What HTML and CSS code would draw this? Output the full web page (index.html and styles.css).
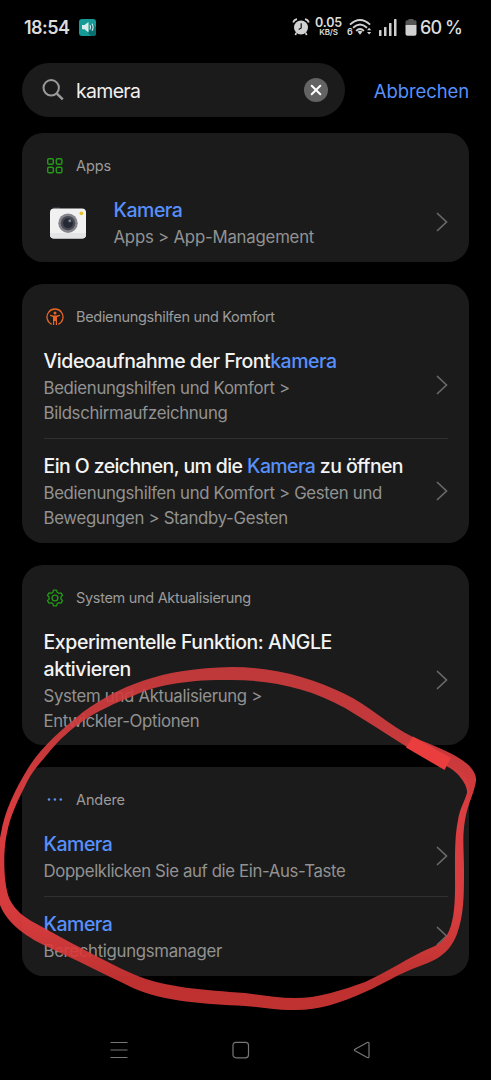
FILE: index.html
```
<!DOCTYPE html>
<html lang="de">
<head>
<meta charset="utf-8">
<meta name="viewport" content="width=device-width, initial-scale=1">
<title>Einstellungen – Suche</title>
<link rel="stylesheet" href="styles.css">
</head>
<body>
<div class="phone">
  <header class="status">
    <span class="clock">18:54</span>
    <svg class="speaker" width="17" height="17" viewBox="0 0 17 17"><rect width="17" height="17" rx="3" fill="#169a98"/><path d="M9 14l4-9 4 3v6a3 3 0 0 1-3 3h-2z" fill="#08706f"/><path d="M3 6h2.500l4-3v10.500l-4-3.300H3z" fill="#d8eceb"/><path d="M11 6.200q1.300 2 0 4.400M13 4.800q2.200 3.500 0 7" fill="none" stroke="#d8eceb" stroke-width="1.100"/></svg>
    <div class="indicators">
      <svg class="alarm" width="18" height="18" viewBox="0 0 18 18"><circle cx="9" cy="9.500" r="7" fill="#d2d2d2"/><path d="M1.200 4.500Q2 1.800 5 1.200M16.800 4.500Q16 1.800 13 1.200M4.300 15l-1 2M13.700 15l1 2" fill="none" stroke="#d2d2d2" stroke-width="1.700"/><path d="M9.200 5.300V10l-2.500 1.500" fill="none" stroke="#111" stroke-width="1.200"/></svg>
      <span class="speed"><span class="rate">0.05</span><span class="unit">KB/S</span></span>
      <span class="wifi"><span class="gen">6</span><svg width="23" height="18" viewBox="0 0 24 18" fill="none" stroke="#d2d2d2"><path d="M1 6.500Q11.500-3.200 22 6.500M4.200 9.800Q11.500 3 18.800 9.800M7.400 13Q11.500 9.200 15.600 13" stroke-width="1.900"/><path d="M8.800 13.800q2.700-2 5.400 0L11.500 17z" fill="#d2d2d2" stroke="none"/><path d="M18.800 12.500l2.200-2.600 2.200 2.600zM18.800 14.200l2.200 2.600 2.200-2.600z" fill="#d2d2d2" stroke="none"/></svg></span>
      <svg class="signal" width="18" height="17" viewBox="0 0 18 17" fill="#cfcfcf"><rect x="0" y="11" width="2.500" height="6" rx=".6"/><rect x="5" y="8" width="2.500" height="9" rx=".6"/><rect x="10" y="4" width="2.500" height="13" rx=".6"/><rect x="15" y="0" width="2.500" height="17" rx=".6"/></svg>
      <svg class="battery" width="12" height="17" viewBox="0 0 12 17"><path d="M3.500 0h5v1.300H10a1.500 1.500 0 0 1 1.500 1.500V6H.5V2.800A1.500 1.500 0 0 1 2 1.300h1.500z" fill="#555"/><path d="M.5 6h11v8.500A2 2 0 0 1 9.500 16.700h-7A2 2 0 0 1 .5 14.500z" fill="#d2d2d2"/></svg>
      <span class="percent">60 %</span>
    </div>
  </header>

  <div class="search-bar">
    <div class="field">
      <svg width="22" height="22" viewBox="0 0 22 22" fill="none" stroke="#9a9a9a" stroke-width="2"><circle cx="9.200" cy="8.800" r="7.700"/><path d="M14.600 14.300l6.200 6.100" stroke-width="2.500"/></svg>
      <span class="query">kamera</span>
      <svg width="24" height="24" viewBox="0 0 24 24"><circle cx="12" cy="12" r="12" fill="#636363"/><path d="M7.700 7.700l8.600 8.600M16.300 7.700l-8.600 8.600" stroke="#fff" stroke-width="2" stroke-linecap="round"/></svg>
    </div>
    <span class="cancel">Abbrechen</span>
  </div>

  <main class="results">
    <section class="card apps">
      <div class="head"><svg width="18" height="18" viewBox="0 0 18 18" fill="none" stroke="#249a18" stroke-width="1.400"><rect x="1.700" y="1.700" width="5.600" height="5.600" rx="1.300"/><rect x="10.300" y="1.700" width="5.600" height="5.600" rx="1.300"/><rect x="1.700" y="10.200" width="5.600" height="5.600" rx="1.300"/><rect x="10.300" y="10.200" width="5.600" height="5.600" rx="1.300"/></svg><span class="short">Apps</span></div>
      <div class="row">
        <svg class="camera" width="38" height="32" viewBox="0 0 38 32"><rect x="4" y="0" width="7" height="4" rx="1" fill="#30313a"/><rect x="1" y="1.600" width="36" height="30" rx="4" fill="#f1f1f1"/><path d="M1 26h36v1.600a4 4 0 0 1-4 4H5a4 4 0 0 1-4-4z" fill="#e4e4e6"/><circle cx="32.400" cy="6.300" r="1.900" fill="#e3c12c"/><circle cx="19" cy="16.200" r="9.700" fill="#85858b"/><circle cx="19" cy="16.200" r="7.300" fill="#484b55"/><circle cx="19" cy="16.200" r="5" fill="#242934"/><circle cx="20.800" cy="13.800" r="1.500" fill="#7c818b"/></svg>
        <div class="text"><div class="title"><b>Kamera</b></div><div class="sub path">Apps &gt; App-Management</div></div>
        <svg class="chevron" width="12" height="20" viewBox="0 0 12 20"><path d="M1.500 1.500l9 8.500-9 8.500"/></svg>
      </div>
    </section>

    <section class="card">
      <div class="head"><svg width="18" height="18" viewBox="0 0 18 18" fill="none" stroke="#e86526" stroke-width="1.300"><path d="M5.700 16.300a8 8 0 1 1 6.600 0"/><circle cx="9" cy="4.900" r="1.500" fill="#e86526" stroke="none"/><path d="M4 6.800l3.200.6h3.600l3.200-.6v1.300l-3 .8v8H9.800v-4H8.200v4H7v-8l-3-.8z" fill="#e86526" stroke="none"/></svg><span>Bedienungshilfen und Komfort</span></div>
      <div class="row">
        <div class="text"><div class="title">Videoaufnahme der Front<b>kamera</b></div><div class="sub">Bedienungshilfen und Komfort &gt;<br>Bildschirmaufzeichnung</div></div>
        <svg class="chevron" width="12" height="20" viewBox="0 0 12 20"><path d="M1.500 1.500l9 8.500-9 8.500"/></svg>
      </div>
      <div class="row ruled">
        <div class="text"><div class="title tight">Ein O zeichnen, um die <b>Kamera</b> zu öffnen</div><div class="sub">Bedienungshilfen und Komfort &gt; Gesten und<br>Bewegungen &gt; Standby-Gesten</div></div>
        <svg class="chevron" width="12" height="20" viewBox="0 0 12 20"><path d="M1.500 1.500l9 8.500-9 8.500"/></svg>
      </div>
    </section>

    <section class="card system">
      <div class="head"><svg width="18" height="18" viewBox="0 0 18 18" fill="none" stroke="#249a18" stroke-width="1.300" stroke-linejoin="round"><path d="M7.500 1.200h3l.7 2.200 1.500.9 2.300-.5 1.500 2.600L14.900 8v2l1.600 1.600-1.500 2.600-2.300-.5-1.500.9-.7 2.200h-3l-.7-2.200-1.500-.9-2.300.5-1.500-2.600L3.100 10V8L1.500 6.400 3 3.800l2.300.5 1.500-.9z"/><circle cx="9" cy="9" r="2.900"/></svg><span>System und Aktualisierung</span></div>
      <div class="row">
        <div class="text"><div class="title loose">Experimentelle Funktion: ANGLE<br>aktivieren</div><div class="sub">System und Aktualisierung &gt;<br>Entwickler-Optionen</div></div>
        <svg class="chevron" width="12" height="20" viewBox="0 0 12 20"><path d="M1.500 1.500l9 8.500-9 8.500"/></svg>
      </div>
    </section>

    <section class="card other">
      <div class="head"><svg width="18" height="18" viewBox="0 0 18 18" fill="#5b8ff0"><circle cx="3" cy="8.500" r="1.300"/><circle cx="8.900" cy="8.500" r="1.300"/><circle cx="14.800" cy="8.500" r="1.300"/></svg><span class="short">Andere</span></div>
      <div class="row">
        <div class="text"><div class="title"><b>Kamera</b></div><div class="sub dense">Doppelklicken Sie auf die Ein-Aus-Taste</div></div>
        <svg class="chevron" width="12" height="20" viewBox="0 0 12 20"><path d="M1.500 1.500l9 8.500-9 8.500"/></svg>
      </div>
      <div class="row ruled">
        <div class="text"><div class="title"><b>Kamera</b></div><div class="sub">Berechtigungsmanager</div></div>
        <svg class="chevron" width="12" height="20" viewBox="0 0 12 20"><path d="M1.500 1.500l9 8.500-9 8.500"/></svg>
      </div>
    </section>
  </main>

  <nav class="nav">
    <svg width="18" height="18" viewBox="0 0 18 18"><path d="M.5 1.500h17M.5 9h17M.5 16.500h17"/></svg>
    <svg width="18" height="18" viewBox="0 0 18 18"><rect x="1" y="1.300" width="15.500" height="15.500" rx="3"/></svg>
    <svg width="18" height="18" viewBox="0 0 18 18"><path d="M2 8.200L14.200 1.500q1.800-.6 1.800 1v13q0 1.600-1.800 1L2 9.800q-1.200-.8 0-1.600z"/></svg>
  </nav>

  <svg class="marker" width="491" height="1080" viewBox="0 0 491 1080">
    <defs><linearGradient id="ink" gradientUnits="userSpaceOnUse" x1="0" y1="660" x2="0" y2="1010"><stop offset="0" stop-color="#ce3b3d"/><stop offset=".2" stop-color="#d53c3e"/><stop offset=".45" stop-color="#ee4245"/><stop offset=".72" stop-color="#ea4042"/><stop offset=".9" stop-color="#d03534"/><stop offset="1" stop-color="#d33735"/></linearGradient></defs>
    <path fill="url(#ink)" fill-rule="evenodd" opacity=".91" d="M232 667C275 667 312 678 345 694C368 705 390 726 413 737C432 745 449 751 462 760C471 766 477 774 476 781C474 794 468 803 465 820C462 838 464 850 464 870C464 895 464 915 457 934C449 955 434 961 420 966C398 974 385 983 365 992C340 1003 320 1010 295 1010C270 1010 262 1007 245 1006C205 1004 165 1002 133 988C100 972 72 958 50 948C28 938 8 925 0 905C-4 890 -3 850 1 833C5 810 15 790 27 770C40 748 60 731 83 712C118 687 160 668 232 667Z
    M232 680C190 679 155 685 133 696C115 703 98 711 83 721C70 730 60 739 50 751C41 762 33 770 27 782C18 800 10 816 7 833C3 850 3 885 10 900C15 910 24 917 33 922C50 931 65 940 83 949C100 958 117 967 133 974C165 988 205 990 245 993C262 995 277 998 295 998C320 998 342 990 365 982C385 973 410 957 428 949C438 945 444 942 449 931C456 915 455 890 455 870C455 850 455 835 458 820C460 808 464 803 467 793C468 785 458 772 448 767C435 761 420 755 407 747C385 733 365 720 345 708C310 688 270 680 232 680Z"/>
    <path fill="#e93d3e" d="M413 736.500L451 758L444.500 770L406 747.500Z"/>
  </svg>
</div>
</body>
</html>
```
FILE: styles.css
```
* { box-sizing: border-box; }
body { margin: 0; background: #000; font-family: Inter, "Liberation Sans", sans-serif; }
svg { display: block; flex: none; }
.phone { position: relative; width: 491px; height: 1080px; overflow: hidden; background: #000; display: flex; flex-direction: column; }

.status { height: 63px; padding: 0 31px 9px 24px; display: flex; align-items: center; color: #dcdcdc; white-space: nowrap; }
.clock { font-size: 18px; font-weight: 600; letter-spacing: -.55px; }
.speaker { margin-left: 10px; }
.indicators { margin-left: auto; display: flex; align-items: center; }
.speed { width: 27px; margin-left: 5px; display: flex; flex-direction: column; align-items: center; font-weight: 600; }
.rate { font-size: 12.500px; line-height: 10px; letter-spacing: -.1px; }
.unit { font-size: 8px; line-height: 8px; letter-spacing: -.1px; }
.wifi { margin-left: 5px; display: flex; align-items: flex-end; }
.gen { font-size: 9px; line-height: 9px; font-weight: 600; width: 2px; }
.signal { margin-left: 7px; }
.battery { margin-left: 8px; }
.percent { margin-left: 3px; font-size: 18px; font-weight: 500; width: 40px; letter-spacing: -.9px; }

.search-bar { height: 54px; padding: 0 22px 0 22px; display: flex; align-items: center; justify-content: space-between; }
.field { width: 323px; height: 54px; border-radius: 27px; background: #1b1b1b; padding: 0 17px 0 20px; display: flex; align-items: center; }
.query { flex: 1; margin-left: 12px; padding-top: 2px; font-size: 19.500px; color: #f0f0f0; letter-spacing: -.7px; }
.cancel { padding-top: 1px; font-size: 18.500px; letter-spacing: -.1px; color: #5790fb; }

.results { margin-top: 16px; padding: 0 22px; display: flex; flex-direction: column; gap: 22px; }
.card { background: #1b1b1b; border-radius: 21px; padding: 0 21px 0 21.500px; height: 259px; }
.apps { height: 129px; }
.system { height: 180px; }
.other { height: 209px; }
.head { height: 49px; padding: 16px 0 0 2px; display: flex; align-items: center; gap: 12.500px; font-size: 14.500px; line-height: 18px; letter-spacing: -.31px; color: #9b9b9b; }
.short { letter-spacing: -.1px; }
.row { padding: 14.500px 0 12px; display: flex; align-items: center; justify-content: space-between; }
.ruled { border-top: 1px solid #303030; padding: 14.500px 0 11px; }
.text { flex: 1; white-space: nowrap; }
.title { font-size: 19.500px; line-height: 27px; font-weight: 500; letter-spacing: -.47px; color: #f3f3f3; }
.title b { color: #5790fb; font-weight: 450; }
.tight { letter-spacing: -.6px; }
.loose { letter-spacing: -.42px; }
.sub { margin-top: 1px; font-size: 16.800px; line-height: 25px; letter-spacing: -.32px; color: #929292; }
.path { letter-spacing: -.22px; }
.dense { letter-spacing: -.37px; }
.camera { margin: 0 27px 0 5px; }
.chevron { margin-bottom: 3px; fill: none; stroke: #696969; stroke-width: 1.700; stroke-linecap: round; }

.nav { margin-top: auto; height: 60px; padding: 0 120px 0 110px; display: flex; align-items: center; justify-content: space-between; }
.nav svg { fill: none; stroke: #777; stroke-width: 1.200; }

.marker { position: absolute; left: 0; top: 0; pointer-events: none; }
```
